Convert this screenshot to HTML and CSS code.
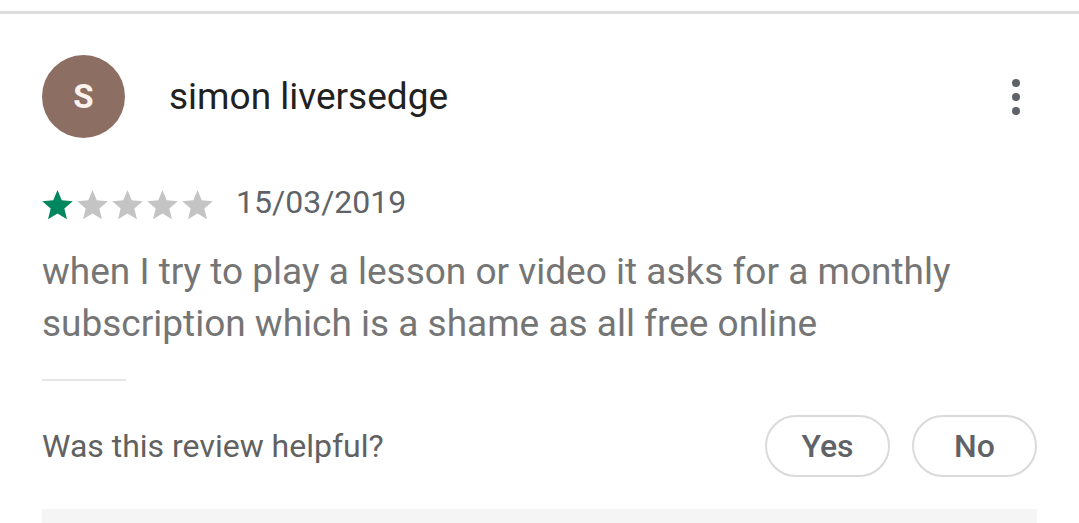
FILE: index.html
```html
<!DOCTYPE html>
<html lang="en">
<head>
  <meta charset="UTF-8">
  <meta name="viewport" content="width=device-width, initial-scale=1.0">
  <title>Review</title>
  <link rel="stylesheet" href="styles.css">
</head>
<body>
  <!-- Divider above the review card -->
  <div class="top-rule"></div>

  <div class="review">
    <!-- Reviewer header -->
    <div class="review-header">
      <div class="avatar">S</div>
      <div class="author">simon liversedge</div>
      <div class="more" aria-label="More options">
        <span></span><span></span><span></span>
      </div>
    </div>

    <!-- Rating and date -->
    <div class="meta">
      <div class="stars">
        <svg class="star on" viewBox="0 0 24 24"><path d="M12 2l2.9 7.1 7.6.6-5.8 5 1.8 7.4L12 18.1l-6.5 4 1.8-7.4-5.8-5 7.6-.6z"/></svg>
        <svg class="star" viewBox="0 0 24 24"><path d="M12 2l2.9 7.1 7.6.6-5.8 5 1.8 7.4L12 18.1l-6.5 4 1.8-7.4-5.8-5 7.6-.6z"/></svg>
        <svg class="star" viewBox="0 0 24 24"><path d="M12 2l2.9 7.1 7.6.6-5.8 5 1.8 7.4L12 18.1l-6.5 4 1.8-7.4-5.8-5 7.6-.6z"/></svg>
        <svg class="star" viewBox="0 0 24 24"><path d="M12 2l2.9 7.1 7.6.6-5.8 5 1.8 7.4L12 18.1l-6.5 4 1.8-7.4-5.8-5 7.6-.6z"/></svg>
        <svg class="star" viewBox="0 0 24 24"><path d="M12 2l2.9 7.1 7.6.6-5.8 5 1.8 7.4L12 18.1l-6.5 4 1.8-7.4-5.8-5 7.6-.6z"/></svg>
      </div>
      <span class="date">15/03/2019</span>
    </div>

    <!-- Review body -->
    <p class="body">when I try to play a lesson or video it asks for a monthly subscription which is a shame as all free online</p>

    <div class="short-rule"></div>

    <!-- Helpful prompt -->
    <div class="helpful">
      <span class="question">Was this review helpful?</span>
      <div class="actions">
        <button class="pill">Yes</button>
        <button class="pill">No</button>
      </div>
    </div>

    <!-- Next card peeking in -->
    <div class="next-card"></div>
  </div>
</body>
</html>
```

FILE: styles.css
```css
body {
  margin: 0;
  background: #ffffff;
  font-family: Roboto, "Noto Sans", sans-serif;
  overflow: hidden;
}
.top-rule {
  margin-top: 11px;
  height: 3px;
  background: #dddddd;
}
.review {
  padding: 0 42px;
}
/* Header */
.review-header {
  display: flex;
  align-items: center;
  margin-top: 41px;
}
.avatar {
  width: 83px;
  height: 83px;
  border-radius: 50%;
  background: #8d6e63;
  color: #faf3ee;
  font-size: 33px;
  font-weight: 700;
  display: flex;
  align-items: center;
  justify-content: center;
  flex-shrink: 0;
}
.author {
  margin-left: 44px;
  font-size: 37px;
  color: #212121;
  flex: 1;
}
.more {
  display: flex;
  flex-direction: column;
  gap: 6px;
  margin-right: 17px;
}
.more span {
  width: 8px;
  height: 8px;
  border-radius: 50%;
  background: #5f6368;
}
/* Rating row */
.meta {
  display: flex;
  align-items: center;
  margin-top: 45px;
  height: 38px;
}
.stars {
  display: flex;
  margin-left: -2px;
  margin-top: 4px;
}
.star {
  width: 35px;
  height: 35px;
  fill: #c4c4c4;
}
.star.on {
  fill: #01875f;
}
.date {
  margin-left: 21px;
  font-size: 32px;
  color: #5f6368;
}
/* Body text */
.body {
  margin: 25px 0 0;
  font-size: 37px;
  line-height: 52px;
  color: #757575;
}
.short-rule {
  width: 84px;
  height: 2px;
  background: #e6e6e6;
  margin-top: 29px;
}
/* Helpful row */
.helpful {
  display: flex;
  align-items: center;
  justify-content: space-between;
  margin-top: 34px;
}
.question {
  font-size: 32px;
  color: #616161;
}
.actions {
  display: flex;
  gap: 22px;
}
.pill {
  width: 125px;
  height: 62px;
  border: 2px solid #dadada;
  border-radius: 31px;
  background: #ffffff;
  font-family: Roboto, "Noto Sans", sans-serif;
  font-size: 32px;
  font-weight: 500;
  color: #5f6368;
}
.next-card {
  margin-top: 32px;
  height: 20px;
  background: #f5f5f5;
}
```
